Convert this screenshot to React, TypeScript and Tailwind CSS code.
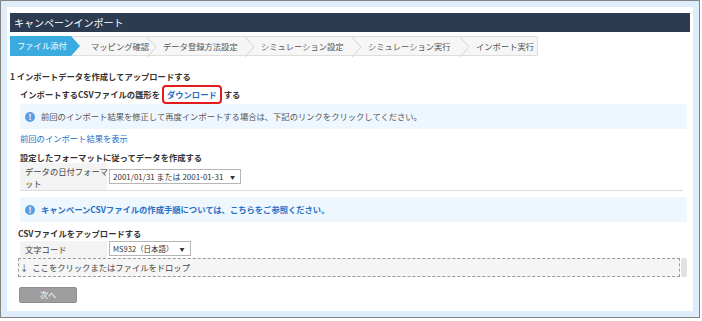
import React from "react";

const steps = [
  { label: "ファイル添付", w: 70 },
  { label: "マッピング確認", w: 72 },
  { label: "データ登録方法設定", w: 98 },
  { label: "シミュレーション設定", w: 107 },
  { label: "シミュレーション実行", w: 108 },
  { label: "インポート実行", w: 73 },
];

function InfoIcon() {
  return (
    <span className="flex h-[10px] w-[10px] shrink-0 items-center justify-center rounded-full bg-[#5a9fe2] text-[8px] font-bold leading-none text-white">
      !
    </span>
  );
}

function Chevron() {
  return (
    <svg width="10" height="20" viewBox="0 0 10 20" className="absolute right-[-5px] top-0 z-10">
      <polyline points="0,0 9,10 0,20" fill="none" stroke="#d4d4d4" strokeWidth="1" />
    </svg>
  );
}

export default function App() {
  return (
    <div className="h-[321px] w-[702px] bg-white font-['Noto_Sans_CJK_JP',sans-serif] text-[8.3px] text-[#333]">
      <div className="h-[318px] w-[700px] border border-[#858585] bg-[#dfecfa] p-[6px]">
        <div className="flex h-full flex-col bg-white px-[3px] pt-[6px]">
          {/* Title */}
          <div className="flex h-[19px] shrink-0 items-center bg-[#2c3b50] pl-[4px] text-[10px] text-white">
            キャンペーンインポート
          </div>
          {/* Steps */}
          <div className="mt-[4px] flex h-[20px] w-[528px] shrink-0 border-y border-r border-[#dedede] bg-[#f6f6f6]">
            {steps.map((s, i) => (
              <div
                key={s.label}
                className="relative flex h-full shrink-0 items-center"
                style={{ width: s.w }}
              >
                {i === 0 ? (
                  <>
                    <div className="-mt-px flex h-[20px] w-[62px] items-center bg-[#3baadf] pl-[7px] text-white">
                      {s.label}
                    </div>
                    <svg width="9" height="20" viewBox="0 0 9 20" className="-mt-px shrink-0">
                      <polygon points="0,0 9,10 0,20" fill="#3baadf" />
                    </svg>
                  </>
                ) : (
                  <>
                    <span className="whitespace-nowrap pl-[11px] text-[#555]">{s.label}</span>
                    {i < steps.length - 1 && <Chevron />}
                  </>
                )}
              </div>
            ))}
          </div>

          {/* Section 1 */}
          <div className="mt-[13px] flex h-[14px] items-center font-bold">1 インポートデータを作成してアップロードする</div>
          <div className="pl-[10px] pr-[3px]">
            <div className="mt-[2px] flex h-[19px] items-center font-bold">
              <span>インポートするCSVファイルの雛形を</span>
              <span className="mx-[2px] flex h-[19px] items-center rounded-[4px] border-2 border-[#e41b1b] px-[3px] text-[#2470c4]">
                ダウンロード
              </span>
              <span>する</span>
            </div>
            <div className="flex h-[25px] items-center gap-[6px] bg-[#eef6fe] pl-[5px] text-[#555]">
              <InfoIcon />
              <span>前回のインポート結果を修正して再度インポートする場合は、下記のリンクをクリックしてください。</span>
            </div>
            <div className="mt-[2px] flex h-[14px] items-center text-[#2470c4]">前回のインポート結果を表示</div>
            <div className="mt-[6px] flex h-[12px] items-center font-bold">設定したフォーマットに従ってデータを作成する</div>
            <div className="mr-[4px] flex h-[28px] items-center border-b border-[#dcdcdc]">
              <div className="flex h-full w-[87px] shrink-0 flex-col justify-center bg-[#f3f3f3] pl-[5px] leading-[12px] text-[#444]">
                <span className="whitespace-nowrap">データの日付フォーマ</span>
                <span className="whitespace-nowrap">ット</span>
              </div>
              <div className="ml-[2px] flex h-[15px] w-[132px] items-center justify-between border border-[#b5b5b5] bg-white pl-[3px] pr-[5px] text-[8px]">
                <span className="whitespace-nowrap">2001/01/31 または 2001-01-31</span>
                <span className="text-[5px]">▼</span>
              </div>
            </div>
            <div className="mt-[6px] flex h-[25px] items-center gap-[6px] bg-[#eef6fe] pl-[5px] font-bold text-[#2470c4]">
              <InfoIcon />
              <span>キャンペーンCSVファイルの作成手順については、こちらをご参照ください。</span>
            </div>
            <div className="-ml-[2px] mt-[5px] flex h-[12px] items-center font-bold">CSVファイルをアップロードする</div>
            <div className="mt-[2px] flex h-[17px] items-start">
              <div className="flex h-full w-[87px] shrink-0 items-center bg-[#f3f3f3] pl-[5px] text-[#444]">文字コード</div>
              <div className="ml-[2px] flex h-[15px] w-[82px] items-center border border-[#b5b5b5] bg-white pl-[3px] text-[7.5px]">
                <span className="whitespace-nowrap">MS932（日本語）</span>
                <span className="ml-[6px] text-[5px]">▼</span>
              </div>
            </div>
            <div className="-ml-[2px] flex h-[19px] items-stretch">
              <div className="flex flex-1 items-center border border-dashed border-[#9a9a9a] bg-[#f5f5f5] pl-[1px] text-[#444]">
                <span className="mr-[4px]">↓</span>
                <span>ここをクリックまたはファイルをドロップ</span>
              </div>
              <div className="ml-[1px] w-[6px] rounded-[2px] bg-[#e2e2e2]" />
            </div>
            <div className="-ml-px mt-[10px] flex h-[16px] w-[58px] items-center justify-center rounded-[2px] border border-[#8e8e8e] bg-[#9d9d9d] text-[8px] text-white">
              次へ
            </div>
          </div>
        </div>
      </div>
    </div>
  );
}
